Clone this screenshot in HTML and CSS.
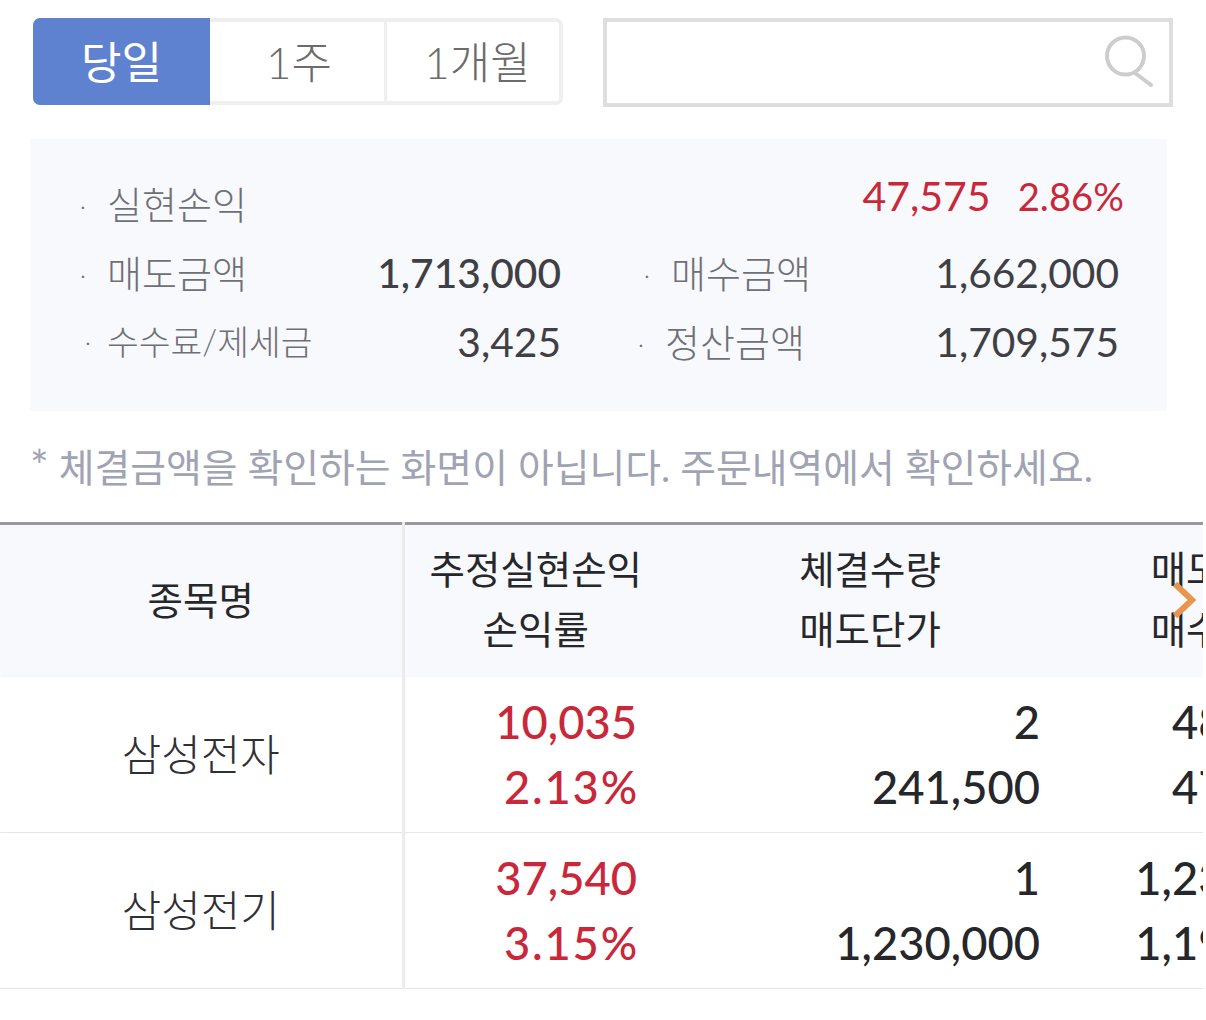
FILE: index.html
```html
<!DOCTYPE html>
<html lang="ko">
<head>
    <meta charset="UTF-8">
    <meta name="viewport" content="width=device-width, initial-scale=1.0">
    <title>실현손익</title>
    <link rel="stylesheet" href="styles.css">
</head>
<body>

    <div class="top-bar">
        <div class="period-tabs">
            <button class="tab active">당일</button>
            <button class="tab">1주</button>
            <button class="tab">1개월</button>
        </div>
        <div class="search-box">
            <svg class="search-icon" width="50" height="54" viewBox="0 0 50 54" fill="none">
                <circle cx="21.5" cy="22" r="18.5" stroke="#cdcdcd" stroke-width="4"/>
                <path d="M31 39 L47 51" stroke="#cdcdcd" stroke-width="4" stroke-linecap="round"/>
            </svg>
        </div>
    </div>

    <div class="summary">
        <div class="summary-row first">
            <span class="label"><i>·</i>실현손익</span>
            <span class="profit">47,575</span>
            <span class="profit-rate">2.86%</span>
        </div>
        <div class="summary-row second">
            <div class="pair left">
                <span class="label"><i>·</i>매도금액</span>
                <span class="value strong">1,713,000</span>
            </div>
            <div class="pair right">
                <span class="label"><i>·</i>매수금액</span>
                <span class="value">1,662,000</span>
            </div>
        </div>
        <div class="summary-row third">
            <div class="pair left">
                <span class="label small"><i>·</i>수수료/제세금</span>
                <span class="value">3,425</span>
            </div>
            <div class="pair right">
                <span class="label"><i>·</i>정산금액</span>
                <span class="value">1,709,575</span>
            </div>
        </div>
    </div>

    <p class="note"><span class="star">*</span> 체결금액을 확인하는 화면이 아닙니다. 주문내역에서 확인하세요.</p>

    <div class="table-wrap">
        <table class="trade-table">
            <colgroup>
                <col class="col-name">
                <col class="col-profit">
                <col class="col-qty">
                <col class="col-amount">
            </colgroup>
            <thead>
                <tr>
                    <th class="name-cell">종목명</th>
                    <th>추정실현손익<br>손익률</th>
                    <th>체결수량<br>매도단가</th>
                    <th>매도금액<br>매수금액</th>
                </tr>
            </thead>
            <tbody>
                <tr>
                    <td class="name-cell">삼성전자</td>
                    <td class="up">10,035<br><span class="rate">2.13%</span></td>
                    <td class="qty">2<br>241,500</td>
                    <td>483,000<br>473,000</td>
                </tr>
                <tr>
                    <td class="name-cell">삼성전기</td>
                    <td class="up">37,540<br><span class="rate">3.15%</span></td>
                    <td class="qty">1<br>1,230,000</td>
                    <td>1,230,000<br>1,192,000</td>
                </tr>
            </tbody>
        </table>
        <svg class="more-arrow" width="26" height="38" viewBox="0 0 26 38" fill="none">
            <path d="M4 3 L21 19 L4 35" stroke="#e8954f" stroke-width="6"/>
        </svg>
    </div>

</body>
</html>
```

FILE: styles.css
```css
body {
    margin: 0;
    background-color: white;
    font-family: "Lato", "Noto Sans CJK KR", sans-serif;
    overflow: hidden;
}

.top-bar {
    display: flex;
    padding: 18px 33px 0 33px;
    gap: 40px;
}

.period-tabs {
    display: flex;
    width: 530px;
    height: 87px;
    box-sizing: border-box;
    border: 4px solid #efefef;
    border-radius: 7px;
}

.tab {
    width: 177px;
    padding: 0 0 3px 4px;
    border: none;
    border-right: 3px solid #efefef;
    background-color: white;
    color: #6b6b6b;
    font-family: inherit;
    font-size: 44px;
    font-weight: 300;
}

.tab:last-child {
    width: 171px;
    padding-left: 10px;
    border-right: none;
}

.tab.active {
    width: 177px;
    margin: -4px 0 -4px -4px;
    padding-left: 0;
    border: none;
    border-radius: 7px 0 0 7px;
    background-color: #5f82d0;
    color: white;
    font-weight: 400;
}

.search-box {
    position: relative;
    width: 570px;
    height: 89px;
    box-sizing: border-box;
    border: 4px solid #dedede;
}

.search-icon {
    position: absolute;
    top: 12px;
    right: 15px;
}

.summary {
    margin: 32px 0 0 30px;
    width: 1137px;
    height: 272px;
    box-sizing: border-box;
    padding-top: 33px;
    background-color: #f8f9fd;
}

.summary-row {
    display: grid;
    grid-template-columns: 531px 558px;
    align-items: center;
    height: 60px;
}

.summary-row.first {
    display: flex;
    padding-left: 50px;
}

.summary-row.second {
    margin-top: 9px;
}

.summary-row.third {
    margin-top: 9px;
}

.pair {
    display: flex;
    align-items: center;
    justify-content: space-between;
}

.second .left {
    padding-left: 50px;
}

.third .left {
    padding-left: 55px;
}

.second .right {
    padding-left: 83px;
}

.third .right {
    padding-left: 77px;
}

.label {
    color: #6f7075;
    font-size: 38px;
    font-weight: 300;
    white-space: nowrap;
}

.label.small {
    font-size: 34.5px;
}

.label i {
    display: inline-block;
    width: 27px;
    font-size: 24px;
    font-style: normal;
    vertical-align: 4px;
}

.label.small i {
    width: 22px;
}

.value {
    margin-top: 2px;
    color: #3f4045;
    font-size: 40.7px;
}

.value.strong {
    font-weight: 500;
}

.profit {
    margin-left: auto;
    margin-top: -14px;
    color: #c9283a;
    font-size: 41px;
}

.profit-rate {
    margin: -12px 43px 0 27px;
    color: #c9283a;
    font-size: 38.3px;
}

.note {
    margin: 32px 0 0 30px;
    color: #a0a3b3;
    font-size: 38.9px;
    font-weight: 400;
    line-height: 48px;
    white-space: nowrap;
}

.star {
    font-size: 44px;
    line-height: 40px;
}

.table-wrap {
    position: relative;
    margin-top: 31px;
    width: 1203px;
    overflow: hidden;
}

.trade-table {
    width: 1370px;
    table-layout: fixed;
    border-collapse: collapse;
    border-top: 3px solid #999999;
}

.col-name {
    width: 403px;
}

.col-profit {
    width: 264px;
}

.col-qty {
    width: 406px;
}

.col-amount {
    width: 297px;
}

.trade-table th {
    height: 148px;
    padding: 0 0 4px 0;
    background-color: #f8f9fd;
    color: #26272b;
    font-size: 38.5px;
    font-weight: 400;
    line-height: 60px;
}

.trade-table td {
    height: 153px;
    padding: 0 30px 2px 0;
    border-bottom: 1px solid #e6e6e6;
    color: #26272b;
    font-size: 45.3px;
    font-weight: 500;
    line-height: 65px;
    text-align: right;
}

.trade-table td.qty {
    padding-right: 33px;
}

.trade-table .name-cell {
    padding: 0 0 3px 0;
    border-right: 3px solid #ececec;
    box-shadow: 2px 0 3px rgba(0, 0, 0, 0.04);
    text-align: center;
}

.trade-table td.name-cell {
    padding: 0;
    color: #2f3034;
    font-size: 43px;
    font-weight: 300;
}

.trade-table td.up {
    color: #c9283a;
}

.rate {
    margin-right: -2px;
    letter-spacing: 1.8px;
}

.more-arrow {
    position: absolute;
    top: 59px;
    right: 6px;
}
```
